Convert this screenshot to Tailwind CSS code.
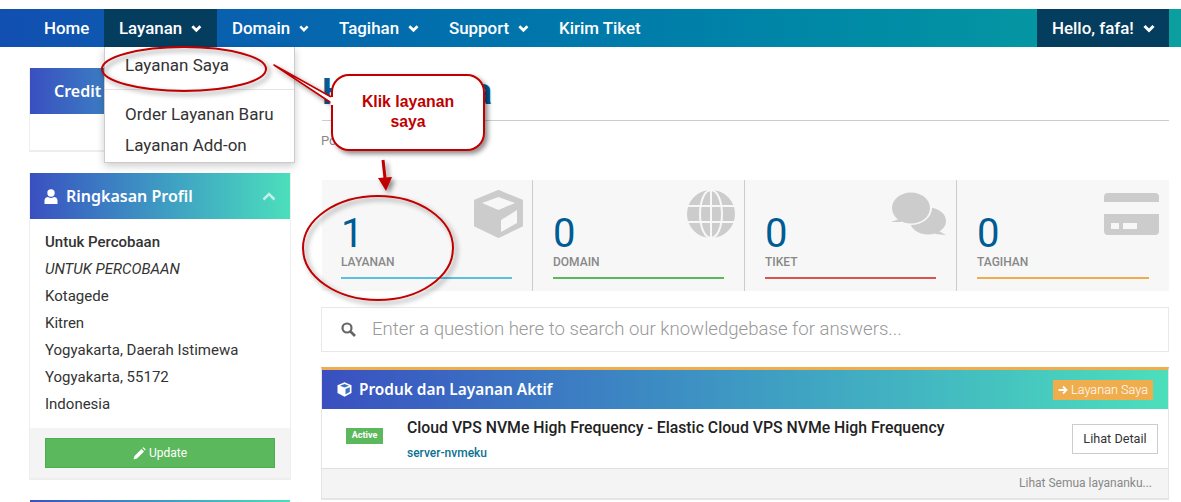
<!DOCTYPE html>
<html><head><meta charset="utf-8">
<script src="https://cdn.jsdelivr.net/npm/@tailwindcss/browser@4"></script>
</head>
<body class="bg-white font-['Roboto',sans-serif] text-[#333] overflow-hidden">
<div class="relative w-[1181px] h-[502px] overflow-hidden pt-[9px]">
  <nav class="h-[38px] flex justify-between pl-[29px] pr-[12px] bg-gradient-to-r from-[#124fb1] to-[#0c9f9f] text-white font-medium text-[16.900px]">
    <div class="flex">
      <a class="px-[15px] pt-px w-[75px] flex items-center">Home</a>
      <a class="px-[15px] pt-px w-[113px] flex items-center gap-[9px] bg-[#053d5f]">Layanan <svg class="w-[12px] h-[9px]" viewBox="0 0 12 9"><path d="M1.500 2 6 6.500 10.500 2" fill="none" stroke="white" stroke-width="3"/></svg></a>
      <a class="px-[15px] pt-px w-[107px] flex items-center gap-[9px]">Domain <svg class="w-[12px] h-[9px]" viewBox="0 0 12 9"><path d="M1.500 2 6 6.500 10.500 2" fill="none" stroke="white" stroke-width="3"/></svg></a>
      <a class="px-[15px] pt-px w-[110px] flex items-center gap-[9px]">Tagihan <svg class="w-[12px] h-[9px]" viewBox="0 0 12 9"><path d="M1.500 2 6 6.500 10.500 2" fill="none" stroke="white" stroke-width="3"/></svg></a>
      <a class="px-[15px] pt-px w-[110px] flex items-center gap-[9px]">Support <svg class="w-[12px] h-[9px]" viewBox="0 0 12 9"><path d="M1.500 2 6 6.500 10.500 2" fill="none" stroke="white" stroke-width="3"/></svg></a>
      <a class="px-[15px] pt-px flex items-center">Kirim Tiket</a>
    </div>
    <a class="w-[132px] pl-[15px] pt-px flex items-center gap-[9px] bg-[#053d5f]">Hello, fafa! <svg class="w-[12px] h-[9px]" viewBox="0 0 12 9"><path d="M1.500 2 6 6.500 10.500 2" fill="none" stroke="white" stroke-width="3"/></svg></a>
  </nav>

  <div class="flex gap-[32px] pl-[30px] pr-[12px] pt-[21px]">
    <aside class="w-[260px] shrink-0">
      <section class="h-[84px] border-b-2 border-x border-[#eee] -mx-px">
        <div class="h-[46px] flex items-center pl-[24px] bg-gradient-to-r from-[#3a4fc0] to-[#4cdfbb] text-white font-['Noto_Sans',sans-serif] font-semibold text-[16px]">Credit</div>
      </section>
      <section class="mt-[21px] h-[307px] border-b-2 border-r border-l border-[#eee] flex flex-col -mx-px">
        <div class="h-[46px] flex items-center justify-between px-[14px] bg-gradient-to-r from-[#3a4fc0] to-[#4cdfbb] text-white font-['Noto_Sans',sans-serif] font-semibold text-[16px]">
          <span class="flex items-center gap-[8px]"><svg class="w-[14px] h-[15px]" viewBox="0 0 14 15" fill="white"><circle cx="7" cy="4" r="3.700"/><path d="M0.500 15V11.500C0.500 9 2.500 8 4 8 5 8.700 6 9 7 9S9 8.700 10 8C11.500 8 13.500 9 13.500 11.500V15Z"/></svg>Ringkasan Profil</span>
          <svg class="w-[14px] h-[9px]" viewBox="0 0 14 9"><path d="M1.500 7.500 7 2 12.500 7.500" fill="none" stroke="white" stroke-opacity=".65" stroke-width="2.500"/></svg>
        </div>
        <div class="px-[15px] pt-[10px] text-[15px] leading-[27px] flex-1">
          <div class="font-medium">Untuk Percobaan</div>
          <div class="italic">UNTUK PERCOBAAN</div>
          <div>Kotagede</div>
          <div>Kitren</div>
          <div>Yogyakarta, Daerah Istimewa</div>
          <div>Yogyakarta, 55172</div>
          <div>Indonesia</div>
        </div>
        <div class="h-[50px] bg-[#f4f4f4] px-[15px] pt-[10px]">
          <div class="h-[30px] bg-[#5cb85c] border border-[#4cae4c] text-white text-[12px] flex items-center justify-center gap-[3px]"><svg class="w-[13px] h-[13px]" viewBox="0 0 13 13" fill="white"><path d="M0.500 12.500 1.500 9 8.500 2 11 4.500 4 11.500ZM9.500 1 10.500 0.300 12.700 2.500 12 3.500Z"/></svg>Update</div>
        </div>
      </section>
      <div class="mt-[20px] h-[4px] bg-gradient-to-r from-[#3a4fc0] to-[#4cdfbb]"></div>
    </aside>

    <main class="flex-1 min-w-0">
      <div class="h-[53px] border-b border-[#ccc] text-[36px] font-bold text-[#035c94] leading-[44px] pt-[2px] tracking-[0.800px]">Halo, Fafa</div>
      <div class="h-[38px] pt-[11px] -ml-px text-[13px] leading-[17px] text-[#888]">Portal Home</div>

      <div class="mt-[21px] h-[111px] bg-[#f7f7f7] grid grid-cols-[210px_212px_212px_1fr]">
        <div class="relative px-[19px] pt-[32px]">
          <div class="text-[40px] font-normal leading-[43px] text-[#005c94]">1</div>
          <div class="text-[12px] font-medium text-[#888] leading-[14px]">LAYANAN</div>
          <div class="h-[2px] bg-[#5bc0de] mt-[8px] w-[171px]"></div>
          <svg class="absolute left-[152px] top-[10px] w-[49px] h-[48px]" viewBox="0 0 49 48"><path d="M24.500 1.500 47.500 11V35.500L24.500 46.500 1.500 35.500V11Z" fill="#ccc" stroke="#ccc" stroke-width="3" stroke-linejoin="round"/><path d="M24.500 7 41 13 24.500 20 8 13Z" fill="#f7f7f7"/><path d="M27 30 43 20V33L27 42Z" fill="#f7f7f7"/></svg>
        </div>
        <div class="relative border-l border-[#ccc] px-[20px] pt-[32px]">
          <div class="text-[40px] font-normal leading-[43px] text-[#005c94]">0</div>
          <div class="text-[12px] font-medium text-[#888] leading-[14px]">DOMAIN</div>
          <div class="h-[2px] bg-[#5cb85c] mt-[8px] w-[171px]"></div>
          <svg class="absolute left-[154px] top-[10px] w-[48px] h-[48px]" viewBox="0 0 48 48"><circle cx="24" cy="24" r="24" fill="#ccc"/><g fill="none" stroke="#f7f7f7" stroke-width="2"><ellipse cx="24" cy="24" rx="11" ry="24"/><path d="M0 16H48M0 32H48M24 0V48"/></g></svg>
        </div>
        <div class="relative border-l border-[#ccc] px-[20px] pt-[32px]">
          <div class="text-[40px] font-normal leading-[43px] text-[#005c94]">0</div>
          <div class="text-[12px] font-medium text-[#888] leading-[14px]">TIKET</div>
          <div class="h-[2px] bg-[#d9534f] mt-[8px] w-[171px]"></div>
          <svg class="absolute left-[146px] top-[12px] w-[56px] h-[46px]" viewBox="0 0 56 46"><ellipse cx="37" cy="29" rx="18" ry="13.500" fill="#ccc"/><path d="M46 38 55 43 44 42Z" fill="#ccc"/><ellipse cx="20" cy="16" rx="21" ry="17" fill="#f7f7f7"/><ellipse cx="20" cy="16" rx="19" ry="15.500" fill="#ccc"/><path d="M8 27 0 30 11 30Z" fill="#ccc"/></svg>
        </div>
        <div class="relative border-l border-[#ccc] px-[20px] pt-[32px]">
          <div class="text-[40px] font-normal leading-[43px] text-[#005c94]">0</div>
          <div class="text-[12px] font-medium text-[#888] leading-[14px]">TAGIHAN</div>
          <div class="h-[2px] bg-[#f0ad4e] mt-[8px] w-[172px]"></div>
          <svg class="absolute left-[147px] top-[13px] w-[55px] h-[42px]" viewBox="0 0 55 42"><path d="M4 0H51Q55 0 55 4V9H0V4Q0 0 4 0ZM0 21H55V38Q55 42 51 42H4Q0 42 0 38Z" fill="#ccc"/><path d="M7 30H15V36H7ZM19 30H33V36H19Z" fill="#f7f7f7"/></svg>
        </div>
      </div>

      <div class="mt-[16px] -ml-px h-[45px] border border-[#e8e8e8] flex items-center pl-[19px] gap-[16px] text-[18.600px] font-light text-[#999]">
        <svg class="w-[15px] h-[15px]" viewBox="0 0 15 15"><circle cx="6" cy="6" r="4.500" fill="none" stroke="#666" stroke-width="2.200"/><path d="M9.500 9.500 14 14" stroke="#666" stroke-width="2.600"/></svg>
        <span class="pt-px">Enter a question here to search our knowledgebase for answers...</span>
      </div>

      <section class="mt-[15px] -ml-px border-t-[3px] border-[#f0ad4e] h-[133px] border-x border-b-2 border-x-[#e5e5e5] border-b-[#e5e5e5] flex flex-col">
        <div class="h-[39px] shrink-0 flex items-center justify-between pl-[15px] pr-[15px] bg-gradient-to-r from-[#3a4fc0] to-[#4cdfbb] text-white font-['Noto_Sans',sans-serif] font-semibold text-[15.400px]">
          <span class="flex items-center gap-[7px]"><svg class="w-[15px] h-[15px]" viewBox="0 0 15 15"><path d="M7.500 0.300 14.500 3.300V11L7.500 14.700 0.500 11V3.300Z" fill="white"/><path d="M7.500 2 12 3.800 7.500 5.600 3 3.800Z" fill="#3f6fc0"/><path d="M8.500 7 12.800 5.300V10L8.500 12.200Z" fill="#3f6fc0"/></svg>Produk dan Layanan Aktif</span>
          <span class="h-[20px] px-[5px] bg-[#f0ad4e] text-[12.700px] font-['Roboto',sans-serif] font-light flex items-center gap-[3px]"><svg class="w-[10px] h-[10px]" viewBox="0 0 10 10"><path d="M0.500 5H8M5 1.500 8.500 5 5 8.500" fill="none" stroke="white" stroke-width="1.800"/></svg>Layanan Saya</span>
        </div>
        <div class="h-[60px] shrink-0 border-b border-[#e0e0e0] relative pl-[85px] pt-[9px]">
          <span class="absolute left-[24px] top-[19px] h-[16px] w-[37px] bg-[#5cb85c] text-white text-[9px] font-bold flex items-center justify-center">Active</span>
          <div class="text-[15.800px] font-medium leading-[19px] text-[#222]">Cloud VPS NVMe High Frequency - Elastic Cloud VPS NVMe High Frequency</div>
          <div class="text-[12px] font-medium leading-[14px] mt-[9px] text-[#0b7191]">server-nvmeku</div>
          <span class="absolute right-[10px] top-[15px] w-[86px] h-[30px] border border-[#ccc] text-[12.700px] flex items-center justify-center">Lihat Detail</span>
        </div>
        <div class="flex-1 bg-[#f4f4f4] text-right pr-[16px] text-[12px] leading-[28px] text-[#888]">Lihat Semua layananku...</div>
      </section>
    </main>
  </div>

  <!-- dropdown menu -->
  <div class="absolute left-[104px] top-[47px] w-[191px] h-[116px] bg-white border border-t-0 border-[#ccc] shadow-[0_3px_8px_rgba(0,0,0,0.2)] text-[17px]">
    <div class="h-[43px] pl-[20px] pt-[7px] leading-[22px] border-b border-[#e5e5e5]">Layanan Saya</div>
    <div class="pl-[20px] pt-[13px] leading-[22px]">Order Layanan Baru</div>
    <div class="pl-[20px] pt-[9px] leading-[22px]">Layanan Add-on</div>
  </div>

  <!-- annotations -->
  <svg class="absolute left-0 top-0 w-[1181px] h-[502px] pointer-events-none" viewBox="0 0 1181 502">
    <defs><filter id="s" x="-20%" y="-20%" width="150%" height="150%"><feDropShadow dx="3" dy="3" stdDeviation="2.500" flood-color="#000" flood-opacity=".45"/></filter></defs>
    <g filter="url(#s)">
      <ellipse cx="184" cy="69" rx="82" ry="22" fill="none" stroke="#c00000" stroke-width="2"/>
      <ellipse cx="378" cy="248" rx="75" ry="52" fill="none" stroke="#c00000" stroke-width="2"/>
      <path d="M383 160 385 178" stroke="#c00000" stroke-width="3" fill="none"/>
      <path d="M378 178 392 177 386 191Z" fill="#c00000"/>
      <path d="M274 65 333 98V104Z" fill="white" stroke="#c00000" stroke-width="1.500" stroke-linejoin="round"/>
      <rect x="332" y="75" width="152" height="75" rx="17" fill="white" stroke="#c00000" stroke-width="2"/>
    </g>
    <path d="M332 97V105" stroke="white" stroke-width="3"/>
  </svg>
  <div class="absolute left-[332px] top-[92px] w-[152px] text-center font-['Liberation_Sans',sans-serif] font-bold text-[15.800px] leading-[20px] text-[#c00000]">Klik layanan<br>saya</div>
</div>
</body></html>
